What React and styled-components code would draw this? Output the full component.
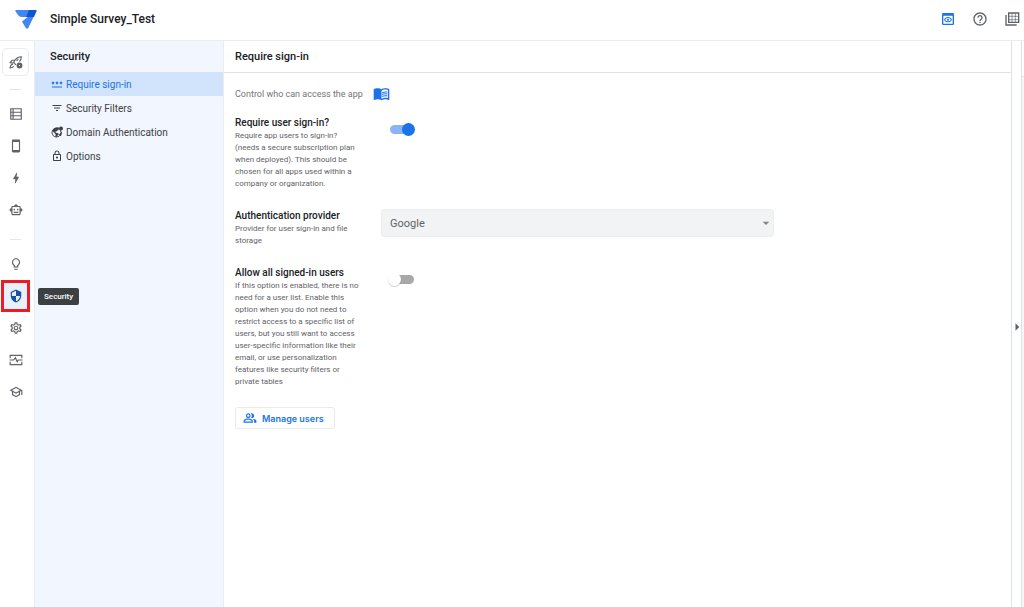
import React, { useState } from 'react'
import styled, { createGlobalStyle } from 'styled-components'
import {
  MdArrowDropDown, MdArrowRight, MdBolt, MdFilterList, MdHelpOutline, MdMenuBook,
  MdOutlineLightbulb, MdOutlineLock, MdOutlinePeopleAlt, MdOutlinePreview,
  MdOutlineSchool, MdOutlineSettings, MdOutlineSmartToy, MdOutlineStayCurrentPortrait,
  MdPassword, MdSecurity
} from 'react-icons/md'

const GlobalStyle = createGlobalStyle`
  * { box-sizing: border-box; }
  body {
    margin: 0;
    background: #fff;
    color: #3c4043;
    font-family: Roboto, 'Liberation Sans', sans-serif;
  }
  button, select { font-family: inherit; }
  button { cursor: pointer; }
`

const Page = styled.div`
  display: flex;
  flex-direction: column;
  min-height: 100vh;
`

const TopBar = styled.header`
  display: flex;
  align-items: center;
  height: 41px;
  padding: 0 4px 2px 15px;
  border-bottom: 1px solid #e8eeee;
`

const AppTitle = styled.h1`
  margin: 0 auto 0 13px;
  font-size: 12px;
  font-weight: 500;
  color: #202124;
`

const TopActions = styled.div`
  display: flex;
  gap: 16px;
`

const IconButton = styled.button`
  display: flex;
  padding: 0;
  border: 0;
  background: none;
  font-size: 16px;
  color: ${props => props.$active ? '#1a73e8' : '#5f6368'};
`

const Body = styled.div`
  display: flex;
  flex: 1;
`

const Rail = styled.nav`
  display: flex;
  flex-direction: column;
  align-items: center;
  width: 35px;
  padding: 7px 3px 0 0;
  border-right: 1px solid #e8eef0;
`

const RailButton = styled.button`
  position: relative;
  display: flex;
  flex: none;
  align-items: center;
  justify-content: center;
  width: 29px;
  height: 32px;
  padding: 0;
  border: 0;
  background: none;
  font-size: 14px;
  color: #5f6368;
`

const DeployButton = styled(RailButton)`
  width: 27px;
  height: 28px;
  border: 1px solid #e8eaed;
  border-radius: 5px;
`

const ActiveRailButton = styled(RailButton)`
  border: 3px solid #ed1c24;
  background: #e8f0fe;
  color: #174ea6;
`

const RailRule = styled.hr`
  width: 11px;
  margin: 13px 0 8px;
  border: 0;
  border-top: 1px solid #e4e6e8;
`

const Tooltip = styled.span`
  position: absolute;
  left: 34px;
  z-index: 1;
  padding: 0 6px;
  border-radius: 2px;
  background: #3c4043;
  color: #fff;
  font-size: 8px;
  font-weight: 500;
  line-height: 17px;
`

const SidePanel = styled.aside`
  width: 189px;
  background: #f2f6fe;
  border-right: 1px solid #e8eef0;
`

const PanelTitle = styled.h2`
  margin: 0;
  padding-left: ${props => props.$side ? 15 : 11}px;
  font-size: 11px;
  font-weight: 500;
  line-height: 31px;
  color: #202124;
`

const SideLink = styled.a`
  display: flex;
  align-items: center;
  gap: 3px;
  height: 24px;
  padding-left: 16px;
  background: ${props => props.$active ? '#d2e3fc' : 'none'};
  color: ${props => props.$active ? '#1a73e8' : '#3c4043'};
  font-size: 10px;
  text-decoration: none;

  svg { font-size: 12px; }
`

const Main = styled.main`
  flex: 1;
  min-width: 0;
`

const MainHeader = styled.div`
  border-bottom: 1px solid #e0e3e6;
`

const Content = styled.div`
  padding: 12px 11px;
`

const Intro = styled.p`
  display: flex;
  align-items: center;
  gap: 10px;
  margin: 0 0 14px;
  font-size: 9px;
  color: #757575;

  svg { font-size: 17px; color: #1a73e8; }
`

const Setting = styled.div`
  display: grid;
  grid-template-columns: 136px minmax(0, 393px);
  gap: 10px;
  align-items: start;
  margin-bottom: 19px;
`

const SettingName = styled.label`
  display: block;
  font-size: 10px;
  font-weight: 500;
  line-height: 14px;
  color: #202124;
`

const SettingText = styled.p`
  max-width: 126px;
  margin: 0;
  font-size: 8px;
  line-height: 12px;
  color: #5f6368;
`

const Switch = styled.input`
  appearance: none;
  display: flex;
  align-items: center;
  width: 24px;
  height: 9px;
  margin: 9px;
  border-radius: 5px;
  background: #a8a8a8;

  &::before {
    content: '';
    flex: none;
    width: 13px;
    height: 13px;
    margin-left: -2px;
    border-radius: 50%;
    background: #fff;
    box-shadow: 0 1px 1px rgba(0, 0, 0, .2);
  }

  &:checked { background: #8ab4f8; }
  &:checked::before {
    margin-left: 12px;
    background: #1a73e8;
    box-shadow: none;
  }
`

const SelectBox = styled.div`
  display: grid;
  align-items: center;

  select, svg { grid-area: 1 / 1; }
  svg {
    justify-self: end;
    color: #80868b;
    font-size: 16px;
    pointer-events: none;
  }
`

const Select = styled.select`
  appearance: none;
  width: 100%;
  height: 28px;
  padding: 0 8px;
  border: 1px solid #eceff1;
  border-radius: 3px;
  background: #f1f3f4;
  color: #5f6368;
  font-size: 11px;
`

const ManageButton = styled.button`
  display: flex;
  align-items: center;
  gap: 5px;
  height: 22px;
  padding: 0 10px 0 7px;
  border: 1px solid #e8eaed;
  border-radius: 3px;
  background: #fff;
  color: #1a73e8;
  font: 600 9px Inter, sans-serif;

  svg { font-size: 14px; }
`

const Gutter = styled.div`
  display: flex;
  width: 10px;
  border-left: 1px solid #e0e3e6;
`

const ExpandButton = styled.button`
  display: flex;
  align-items: center;
  justify-content: center;
  width: 100%;
  padding: 5px 0 0;
  border: 0;
  background: none;
  color: #5f6368;

  svg { flex: none; font-size: 18px; }
`

const PreviewEdge = styled.aside`
  width: 3px;
  padding-top: 35px;
  border-left: 1px solid #e0e3e6;

  &::before {
    content: '';
    display: block;
    height: 100%;
    border-top: 1px solid #e0e3e6;
    background: #f5f6f7;
  }
`

const Logo = () => (
  <svg width='22' height='20' viewBox='0 -1 22 20' aria-hidden='true'>
    <path d='M1 0h14l-2 7H7Q4 7 3 5L.3 1Q0 0 1 0z' fill='#4285f4' />
    <path d='M14 6h5l-5.5 11.5q-1.5 2.5-3 0L7 11.5z' fill='#4285f4' />
    <path d='M14 0h7q1 0 .6 1L19 7h-8z' fill='#0b57d0' />
  </svg>
)

const LineIcon = ({ children }) => (
  <svg
    width='1em' height='1em' viewBox='0 0 24 24' fill='none'
    stroke='currentColor' strokeWidth='2' aria-hidden='true'
  >
    {children}
  </svg>
)

const RocketIcon = () => (
  <LineIcon>
    <path d='M8 13Q11 4 21 3q0 6-3 8M8 13l4 4M9 9 5 9l-3 4 5 1M16 7l-3 3' />
    <path d='M7 16q-4-1-5 6 5 0 6-3' />
    <circle cx='18' cy='18' r='3' strokeWidth='4' />
  </LineIcon>
)

const DataIcon = () => (
  <LineIcon>
    <path d='M3 3h18v18H3zM3 9h18M3 15h18M7 3v18' />
  </LineIcon>
)

const MonitorIcon = () => (
  <LineIcon>
    <path d='M2 9V4h20v5M2 15v5h20v-5M1 12h7l3-4 3 7 2-3h7' />
  </LineIcon>
)

const GlobeIcon = () => (
  <LineIcon>
    <circle cx='11' cy='13' r='9' />
    <path
      d='M3 10l6 6v5l3 1 1-3q4-1 2-4l-6-2v-2l4-1V8l3-1V3Q5 2 3 10z'
      fill='currentColor' stroke='none'
    />
    <path d='M17 17l4-4-2 7z' fill='currentColor' />
    <circle cx='20' cy='5' r='4' fill='currentColor' stroke='none' />
  </LineIcon>
)

const GalleryIcon = () => (
  <LineIcon>
    <path d='M7 3h15v14H7zM3 6v15h16' />
    <path d='M12 3v14M17 3v14M7 8h15M7 13h15' strokeWidth='1' />
  </LineIcon>
)

const sideLinks = [
  { label: 'Require sign-in', Icon: MdPassword },
  { label: 'Security Filters', Icon: MdFilterList },
  { label: 'Domain Authentication', Icon: GlobeIcon },
  { label: 'Options', Icon: MdOutlineLock }
]

function App () {
  const [section, setSection] = useState('Require sign-in')
  const [requireSignIn, setRequireSignIn] = useState(true)
  const [allowAll, setAllowAll] = useState(false)

  return (
    <Page>
      <GlobalStyle />
      <TopBar>
        <Logo />
        <AppTitle>Simple Survey_Test</AppTitle>
        <TopActions>
          <IconButton $active aria-label='Preview'><MdOutlinePreview /></IconButton>
          <IconButton aria-label='Help'><MdHelpOutline /></IconButton>
          <IconButton aria-label='My apps'><GalleryIcon /></IconButton>
        </TopActions>
      </TopBar>
      <Body>
        <Rail>
          <DeployButton aria-label='Deploy'><RocketIcon /></DeployButton>
          <RailRule />
          <RailButton aria-label='Data'><DataIcon /></RailButton>
          <RailButton aria-label='Views'><MdOutlineStayCurrentPortrait /></RailButton>
          <RailButton aria-label='Actions'><MdBolt /></RailButton>
          <RailButton aria-label='Automation'><MdOutlineSmartToy /></RailButton>
          <RailRule />
          <RailButton aria-label='Intelligence'><MdOutlineLightbulb /></RailButton>
          <ActiveRailButton>
            <MdSecurity />
            <Tooltip>Security</Tooltip>
          </ActiveRailButton>
          <RailButton aria-label='Settings'><MdOutlineSettings /></RailButton>
          <RailButton aria-label='Manage'><MonitorIcon /></RailButton>
          <RailButton aria-label='Learn'><MdOutlineSchool /></RailButton>
        </Rail>
        <SidePanel>
          <PanelTitle $side>Security</PanelTitle>
          {sideLinks.map(({ label, Icon }) =>
            <SideLink
              key={label} href='#' $active={label === section}
              onClick={() => setSection(label)}
            >
              <Icon />{label}
            </SideLink>
          )}
        </SidePanel>
        <Main>
          <MainHeader><PanelTitle>Require sign-in</PanelTitle></MainHeader>
          <Content>
            <Intro>Control who can access the app <MdMenuBook /></Intro>
            <Setting>
              <div>
                <SettingName htmlFor='require'>Require user sign-in?</SettingName>
                <SettingText>
                  Require app users to sign-in? (needs a secure subscription plan
                  when deployed). This should be chosen for all apps used within a
                  company or organization.
                </SettingText>
              </div>
              <Switch
                id='require' type='checkbox' checked={requireSignIn}
                onChange={e => setRequireSignIn(e.target.checked)}
              />
            </Setting>
            <Setting>
              <div>
                <SettingName htmlFor='provider'>Authentication provider</SettingName>
                <SettingText>Provider for user sign-in and file storage</SettingText>
              </div>
              <SelectBox>
                <Select id='provider'><option>Google</option></Select>
                <MdArrowDropDown />
              </SelectBox>
            </Setting>
            <Setting>
              <div>
                <SettingName htmlFor='allow'>Allow all signed-in users</SettingName>
                <SettingText>
                  If this option is enabled, there is no need for a user list.
                  Enable this option when you do not need to restrict access to a
                  specific list of users, but you still want to access user-specific
                  information like their email, or use personalization features like
                  security filters or private tables
                </SettingText>
              </div>
              <Switch
                id='allow' type='checkbox' checked={allowAll}
                onChange={e => setAllowAll(e.target.checked)}
              />
            </Setting>
            <ManageButton><MdOutlinePeopleAlt />Manage users</ManageButton>
          </Content>
        </Main>
        <Gutter>
          <ExpandButton aria-label='Toggle preview'><MdArrowRight /></ExpandButton>
        </Gutter>
        <PreviewEdge />
      </Body>
    </Page>
  )
}

export default App
